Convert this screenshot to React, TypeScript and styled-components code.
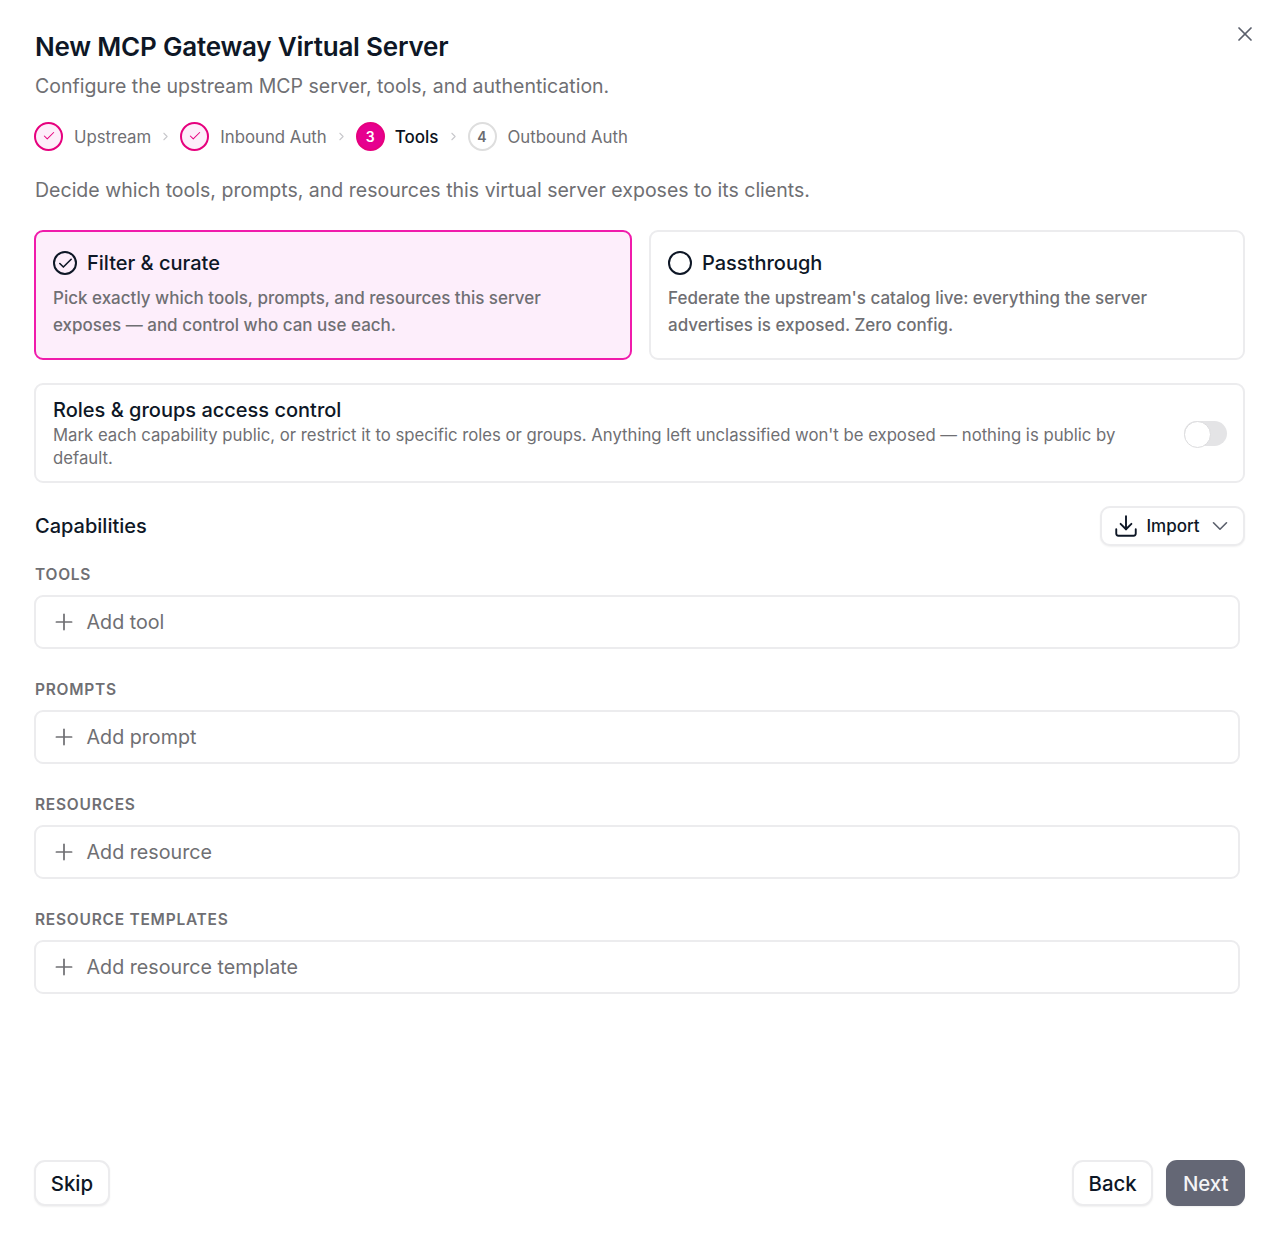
import React from 'react'
import styled, { createGlobalStyle } from 'styled-components'
import { Check, ChevronDown, ChevronRight, Download, Plus, X } from 'lucide-react'

const GlobalStyle = createGlobalStyle`
  html, body {
    margin: 0;
    padding: 0;
    background: #fff;
    font-family: Inter, "Noto Sans", sans-serif;
    color: #0b1220;
  }
  * { box-sizing: border-box; }
`

const Dialog = styled.div`
  position: relative;
  width: 1280px;
  height: 1240px;
  padding: 30px 35px 34px 34px;
  display: flex;
  flex-direction: column;
`
const CloseButton = styled.button`
  position: absolute;
  top: 22px;
  right: 23px;
  width: 24px;
  height: 24px;
  padding: 0;
  border: 0;
  background: none;
  color: #5b606c;
  display: flex;
`
const Title = styled.h1`
  margin: 0;
  padding-left: 1px;
  font-size: 26px;
  line-height: 34px;
  font-weight: 600;
  letter-spacing: -0.2px;
  color: #0e1726;
`
const Subtitle = styled.p`
  margin: 7px 0 0;
  padding-left: 1px;
  font-size: 19.5px;
  line-height: 30px;
  color: #6f6f73;
`
const Steps = styled.div`
  display: flex;
  align-items: center;
  margin-top: 20px;
  height: 30px;
`
const StepCircle = styled.span<{ $state: 'done' | 'active' | 'todo' }>`
  width: 29px;
  height: 29px;
  border-radius: 50%;
  display: flex;
  align-items: center;
  justify-content: center;
  font-size: 14px;
  font-weight: 600;
  border: ${(p) => (p.$state === 'todo' ? '2px solid #dedede' : '2px solid #e6007e')};
  background: ${(p) =>
    p.$state === 'done' ? '#fdeefa' : p.$state === 'active' ? '#e6008f' : '#fff'};
  color: ${(p) =>
    p.$state === 'done' ? '#e6007e' : p.$state === 'active' ? '#fff' : '#6b6b70'};
`
const StepLabel = styled.span<{ $active?: boolean }>`
  margin-left: ${(p) => (p.$active ? '10px' : '11px')};
  padding-top: 1px;
  font-size: ${(p) => (p.$active ? '17px' : '16.8px')};
  line-height: 22px;
  font-weight: ${(p) => (p.$active ? 500 : 400)};
  color: ${(p) => (p.$active ? '#0b1220' : '#6f6f73')};
`
const StepSep = styled.span`
  display: flex;
  width: 29px;
  justify-content: center;
  color: #c8c8cc;
`
const Lead = styled.p`
  margin: 24px 0 0;
  padding-left: 1px;
  font-size: 19.55px;
  line-height: 30px;
  color: #6f6f73;
`
const ModeGrid = styled.div`
  display: grid;
  grid-template-columns: 598px 596px;
  gap: 17px;
  margin-top: 25px;
`
const ModeCard = styled.div<{ $selected?: boolean }>`
  height: 130px;
  padding: 17px 16px 17px 17px;
  border-radius: 9px;
  border: ${(p) => (p.$selected ? '2px solid #f01bab' : '2px solid #ececee')};
  background: ${(p) => (p.$selected ? '#fdeefb' : '#fff')};
`
const ModeHead = styled.div`
  display: flex;
  align-items: center;
  gap: 10px;
  height: 28px;
`
const Radio = styled.span<{ $checked?: boolean }>`
  width: 24px;
  height: 24px;
  border-radius: 50%;
  border: 2px solid #0e1726;
  display: flex;
  align-items: center;
  justify-content: center;
  color: #0e1726;
`
const ModeTitle = styled.span`
  font-size: 20px;
  font-weight: 500;
  color: #0e1726;
`
const ModeText = styled.p`
  margin: 8px 0 0;
  max-width: 530px;
  font-size: 17px;
  line-height: 27px;
  font-weight: 450;
  color: #6f6f73;
`
const AccessCard = styled.div`
  margin-top: 23px;
  height: 100px;
  padding: 12px 16px 12px 17px;
  border: 2px solid #ececee;
  border-radius: 9px;
  display: flex;
  align-items: center;
  justify-content: space-between;
`
const AccessBody = styled.div`
  width: 1090px;
`
const AccessTitle = styled.div`
  font-size: 20px;
  line-height: 27px;
  font-weight: 500;
  color: #0e1726;
`
const AccessText = styled.div`
  font-size: 16.72px;
  line-height: 23px;
  color: #6f6f73;
`
const Toggle = styled.span`
  position: relative;
  width: 43px;
  height: 25px;
  border-radius: 13px;
  background: #e4e4e6;
  display: block;
  &::after {
    content: '';
    position: absolute;
    left: 0;
    top: 0;
    width: 25px;
    height: 25px;
    border-radius: 50%;
    background: #fff;
    border: 1px solid #dcdcde;
  }
`
const CapabilitiesHead = styled.div`
  display: flex;
  align-items: center;
  justify-content: space-between;
  margin-top: 23px;
  height: 40px;
`
const CapabilitiesTitle = styled.h2`
  margin: 0 0 1px;
  padding-left: 1px;
  font-size: 20px;
  line-height: 26px;
  font-weight: 500;
  color: #0e1726;
`
const ImportButton = styled.button`
  height: 40px;
  width: 145px;
  padding: 0 9.5px 0 10.5px;
  display: flex;
  align-items: center;
  justify-content: space-between;
  background: #fff;
  border: 2px solid #ececee;
  border-radius: 10px;
  box-shadow: 0 1px 2px rgba(0, 0, 0, 0.06);
  font-family: inherit;
  font-size: 17px;
  font-weight: 500;
  color: #0e1726;
`
const Section = styled.section`
  margin-top: 18px;
  & + & {
    margin-top: 30px;
  }
`
const SectionLabel = styled.div`
  padding-left: 1px;
  font-size: 15.5px;
  line-height: 22px;
  font-weight: 600;
  letter-spacing: 0.75px;
  color: #6f6f73;
`
const AddRow = styled.button`
  margin-top: 9px;
  width: 1206px;
  height: 54px;
  padding: 0 14.5px;
  display: flex;
  align-items: center;
  gap: 10px;
  background: #fff;
  border: 2px solid #ececee;
  border-radius: 9px;
  font-family: inherit;
  font-size: 19.7px;
  color: #6f6f73;
`
const Footer = styled.div`
  margin-top: auto;
  display: flex;
  align-items: center;
  justify-content: space-between;
`
const FooterRight = styled.div`
  display: flex;
  gap: 13px;
`
const FooterButton = styled.button<{ $primary?: boolean }>`
  height: 46px;
  padding: 0 ${(p) => (p.$primary ? '16.5px' : '14.75px')};
  border-radius: 11px;
  border: ${(p) => (p.$primary ? '0' : '2px solid #ececee')};
  background: ${(p) => (p.$primary ? '#646775' : '#fff')};
  color: ${(p) => (p.$primary ? '#f4f4f6' : '#0e1726')};
  box-shadow: 0 1px 2px rgba(0, 0, 0, 0.06);
  font-family: inherit;
  font-size: 20.4px;
  font-weight: 500;
`

const steps = [
  { label: 'Upstream', state: 'done' },
  { label: 'Inbound Auth', state: 'done' },
  { label: 'Tools', state: 'active', num: 3 },
  { label: 'Outbound Auth', state: 'todo', num: 4 },
] as const

const sections = [
  { label: 'TOOLS', add: 'Add tool' },
  { label: 'PROMPTS', add: 'Add prompt' },
  { label: 'RESOURCES', add: 'Add resource' },
  { label: 'RESOURCE TEMPLATES', add: 'Add resource template' },
]

export default function App() {
  return (
    <Dialog>
      <GlobalStyle />
      <CloseButton>
        <X size={24} strokeWidth={1.75} />
      </CloseButton>
      <Title>New MCP Gateway Virtual Server</Title>
      <Subtitle>Configure the upstream MCP server, tools, and authentication.</Subtitle>
      <Steps>
        {steps.map((s, i) => (
          <React.Fragment key={s.label}>
            {i > 0 && (
              <StepSep>
                <ChevronRight size={13} />
              </StepSep>
            )}
            <StepCircle $state={s.state}>
              {s.state === 'done' ? <Check size={14} strokeWidth={1.75} /> : s.num}
            </StepCircle>
            <StepLabel $active={s.state === 'active'}>{s.label}</StepLabel>
          </React.Fragment>
        ))}
      </Steps>
      <Lead>Decide which tools, prompts, and resources this virtual server exposes to its clients.</Lead>
      <ModeGrid>
        <ModeCard $selected>
          <ModeHead>
            <Radio $checked>
              <Check size={17} strokeWidth={2.25} />
            </Radio>
            <ModeTitle>Filter &amp; curate</ModeTitle>
          </ModeHead>
          <ModeText>
            Pick exactly which tools, prompts, and resources this server exposes — and control who
            can use each.
          </ModeText>
        </ModeCard>
        <ModeCard>
          <ModeHead>
            <Radio />
            <ModeTitle>Passthrough</ModeTitle>
          </ModeHead>
          <ModeText>
            Federate the upstream's catalog live: everything the server advertises is exposed. Zero
            config.
          </ModeText>
        </ModeCard>
      </ModeGrid>
      <AccessCard>
        <AccessBody>
          <AccessTitle>Roles &amp; groups access control</AccessTitle>
          <AccessText>
            Mark each capability public, or restrict it to specific roles or groups. Anything left
            unclassified won't be exposed — nothing is public by default.
          </AccessText>
        </AccessBody>
        <Toggle />
      </AccessCard>
      <CapabilitiesHead>
        <CapabilitiesTitle>Capabilities</CapabilitiesTitle>
        <ImportButton>
          <Download size={26} strokeWidth={1.75} />
          Import
          <ChevronDown size={26} strokeWidth={1.5} color="#5b606c" />
        </ImportButton>
      </CapabilitiesHead>
      {sections.map((s) => (
        <Section key={s.label}>
          <SectionLabel>{s.label}</SectionLabel>
          <AddRow>
            <Plus size={26} strokeWidth={1.6} />
            {s.add}
          </AddRow>
        </Section>
      ))}
      <Footer>
        <FooterButton>Skip</FooterButton>
        <FooterRight>
          <FooterButton>Back</FooterButton>
          <FooterButton $primary>Next</FooterButton>
        </FooterRight>
      </Footer>
    </Dialog>
  )
}
